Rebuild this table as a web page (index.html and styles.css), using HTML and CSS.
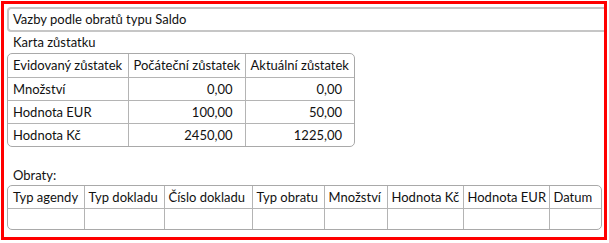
FILE: index.html
```html
<!DOCTYPE html>
<html lang="cs">
<head>
  <meta charset="UTF-8" />
  <title>Vazby podle obratů typu Saldo</title>
  <link rel="stylesheet" href="styles.css">
</head>
<body>
  <div class="frame">
    <div class="title-box">Vazby podle obratů typu Saldo</div>

    <div class="label">Karta zůstatku</div>
    <div class="grid-wrap balance">
      <table>
        <colgroup>
          <col style="width: 120px">
          <col style="width: 117px">
          <col style="width: 109px">
        </colgroup>
        <tr class="head">
          <td>Evidovaný zůstatek</td>
          <td>Počáteční zůstatek</td>
          <td>Aktuální zůstatek</td>
        </tr>
        <tr>
          <td>Množství</td>
          <td class="num">0,00</td>
          <td class="num">0,00</td>
        </tr>
        <tr>
          <td>Hodnota EUR</td>
          <td class="num">100,00</td>
          <td class="num">50,00</td>
        </tr>
        <tr>
          <td>Hodnota Kč</td>
          <td class="num">2450,00</td>
          <td class="num">1225,00</td>
        </tr>
      </table>
    </div>

    <div class="label turnover-label">Obraty:</div>
    <div class="grid-wrap turnover">
      <table>
        <colgroup>
          <col style="width: 76px">
          <col style="width: 80px">
          <col style="width: 88px">
          <col style="width: 72px">
          <col style="width: 63px">
          <col style="width: 76px">
          <col style="width: 86px">
          <col>
        </colgroup>
        <tr class="head">
          <td>Typ agendy</td>
          <td>Typ dokladu</td>
          <td>Číslo dokladu</td>
          <td>Typ obratu</td>
          <td>Množství</td>
          <td>Hodnota Kč</td>
          <td>Hodnota EUR</td>
          <td>Datum</td>
        </tr>
        <tr class="empty">
          <td></td><td></td><td></td><td></td><td></td><td></td><td></td><td></td>
        </tr>
      </table>
    </div>
  </div>
</body>
</html>
```

FILE: styles.css
```css
* {
  box-sizing: border-box;
}
body {
  margin: 0;
  background: #ffffff;
  font-family: Lato, "Open Sans", sans-serif;
  font-size: 13px;
  color: #111111;
}
.frame {
  margin: 1px;
  width: 606px;
  height: 239px;
  border: 3px solid #ff0000;
  padding: 3px 0 0 3px;
  overflow: hidden;
}
.title-box {
  height: 25px;
  border: 2px solid #c6c6c6;
  border-right: none;
  border-radius: 4px 0 0 4px;
  padding: 0 0 0 4px;
  line-height: 21px;
}
.label {
  padding-left: 6px;
  height: 21px;
  line-height: 20px;
}
.turnover-label {
  margin-top: 17px;
  height: 21px;
  line-height: 22px;
}
.grid-wrap {
  border: 1px solid #a9a9a9;
  border-radius: 5px;
  overflow: hidden;
}
.balance {
  width: 348px;
}
.turnover {
  width: 595px;
}
table {
  border-collapse: collapse;
  table-layout: fixed;
  width: 100%;
}
td {
  border: 1px solid #b4b4b4;
  padding: 0 5px;
  height: 23px;
  white-space: nowrap;
  overflow: hidden;
}
tr:first-child td {
  border-top: none;
}
tr:last-child td {
  border-bottom: none;
}
td:first-child {
  border-left: none;
  padding-left: 5px;
}
td:last-child {
  border-right: none;
}
td.num {
  text-align: right;
  padding-right: 12px;
}
.turnover td {
  height: 22px;
  padding: 0 4px;
}
.turnover td:first-child {
  padding-left: 5px;
}
.turnover .empty td {
  height: 21px;
}
```
